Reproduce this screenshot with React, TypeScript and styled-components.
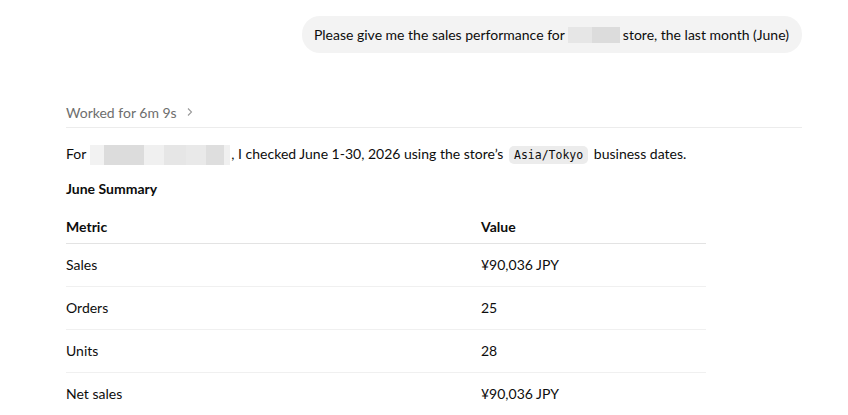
import React from "react";
import styled, { createGlobalStyle } from "styled-components";

const GlobalStyle = createGlobalStyle`
  html, body {
    margin: 0;
    padding: 0;
    background: #ffffff;
  }
  body {
    font-family: Lato, "Noto Sans", sans-serif;
    color: #0d0d0d;
  }
`;

const Page = styled.div`
  width: 848px;
  height: 415px;
  overflow: hidden;
  box-sizing: border-box;
  padding: 16px 46px 0 66px;
`;

const UserRow = styled.div`
  display: flex;
  justify-content: flex-end;
`;

const Bubble = styled.div`
  background: #f3f3f3;
  border-radius: 18px;
  height: 37px;
  padding: 0 13px 0 12px;
  display: flex;
  align-items: center;
  font-size: 14px;
  white-space: nowrap;
`;

const Redact = styled.span<{ $w: number; $shade: string; $h?: number }>`
  display: inline-block;
  width: ${(p) => p.$w}px;
  height: ${(p) => p.$h ?? 16}px;
  background: ${(p) => p.$shade};
  vertical-align: middle;
`;

const RedactGroup = styled.span<{ $left?: number; $right?: number }>`
  display: inline-flex;
  margin: 0 ${(p) => p.$right ?? 3}px 0 ${(p) => p.$left ?? 3}px;
  vertical-align: middle;
`;

const Worked = styled.div`
  margin-top: 46px;
  display: flex;
  align-items: center;
  gap: 8px;
  height: 26px;
  color: #6e6e6e;
  font-size: 14px;
  border-bottom: 1px solid #ececec;
  padding-bottom: 2px;
`;

const Chevron = styled.svg`
  width: 10px;
  height: 10px;
`;

const Para = styled.p`
  margin: 14px 0 0;
  font-size: 14px;
  line-height: 24px;
`;

const Code = styled.code`
  font-family: "DejaVu Sans Mono", "Liberation Mono", monospace;
  font-size: 11.5px;
  background: #ececec;
  border-radius: 5px;
  padding: 2px 5px;
  margin: 0 2px;
`;

const Heading = styled.h3`
  margin: 10px 0 0;
  font-size: 14px;
  font-weight: 700;
  line-height: 24px;
`;

const Table = styled.div`
  margin-top: 9px;
  width: 640px;
`;

const Row = styled.div<{ $head?: boolean }>`
  display: grid;
  grid-template-columns: 415px 1fr;
  height: ${(p) => (p.$head ? 33 : 41)}px;
  padding-bottom: ${(p) => (p.$head ? 0 : 1)}px;
  align-items: center;
  font-size: 14px;
  font-weight: ${(p) => (p.$head ? 700 : 400)};
  border-bottom: 1px solid ${(p) => (p.$head ? "#e3e3e3" : "#f0f0f0")};
`;

const rows = [
  ["Sales", "¥90,036 JPY"],
  ["Orders", "25"],
  ["Units", "28"],
  ["Net sales", "¥90,036 JPY"],
];

export default function App() {
  return (
    <>
      <GlobalStyle />
      <Page>
        <UserRow>
          <Bubble>
            Please give me the sales performance for
            <RedactGroup>
              <Redact $w={24} $shade="#e6e6e6" />
              <Redact $w={28} $shade="#dcdcdc" />
            </RedactGroup>
            store, the last month (June)
          </Bubble>
        </UserRow>
        <Worked>
          Worked for 6m 9s
          <Chevron viewBox="0 0 10 10">
            <path d="M3 1.5 L6.5 5 L3 8.5" fill="none" stroke="#9a9a9a" strokeWidth="1.1" />
          </Chevron>
        </Worked>
        <Para>
          For
          <RedactGroup $left={4} $right={1}>
            <Redact $w={14} $shade="#f2f2f2" $h={20} />
            <Redact $w={40} $shade="#dcdcdc" $h={20} />
            <Redact $w={20} $shade="#f0f0f0" $h={20} />
            <Redact $w={22} $shade="#e6e6e6" $h={20} />
            <Redact $w={20} $shade="#e9e9e9" $h={20} />
            <Redact $w={18} $shade="#dedede" $h={20} />
            <Redact $w={6} $shade="#f0f0f0" $h={20} />
          </RedactGroup>
          , I checked June 1-30, 2026 using the store’s <Code>Asia/Tokyo</Code> business dates.
        </Para>
        <Heading>June Summary</Heading>
        <Table>
          <Row $head>
            <span>Metric</span>
            <span>Value</span>
          </Row>
          {rows.map(([m, v]) => (
            <Row key={m}>
              <span>{m}</span>
              <span>{v}</span>
            </Row>
          ))}
        </Table>
      </Page>
    </>
  );
}
